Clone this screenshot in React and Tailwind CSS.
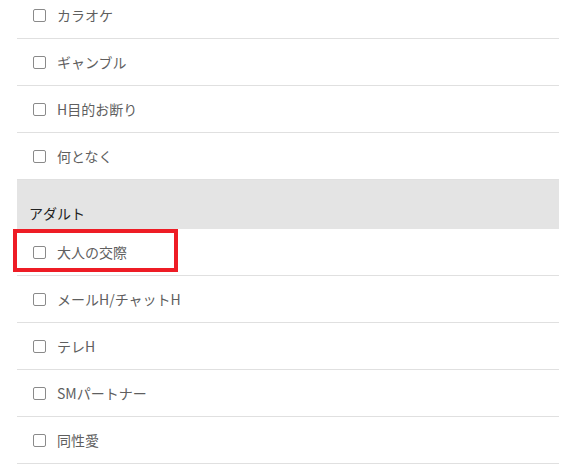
import React from 'react'

const group1 = ['カラオケ', 'ギャンブル', 'H目的お断り', '何となく']
const group2 = ['大人の交際', 'メールH/チャットH', 'テレH', 'SMパートナー', '同性愛']

const Row = ({ label, highlight }) => (
  <label className="relative flex items-center h-[47px] pl-4 border-b border-[#e0e0e0] cursor-pointer">
    <span className="w-[13px] h-[13px] border border-[#8a8a8a] rounded-[2px] bg-white shrink-0" />
    <span className="ml-[11px] text-[14px] leading-5 text-[#5f5f5f]">{label}</span>
    {highlight && (
      <span className="absolute left-[-4px] top-0 w-[165px] h-[43px] border-4 border-[#ee1c25] pointer-events-none" />
    )}
  </label>
)

const App = () => {
  return (
    <div
      className="w-[576px] h-[472px] overflow-hidden bg-white"
      style={{ fontFamily: '"Noto Sans CJK JP", "Noto Sans", sans-serif' }}
    >
      <div className="mx-[17px] mt-[-8px]">
        {/* 目的 */}
        {group1.map((item) => (
          <Row key={item} label={item} />
        ))}

        {/* アダルト */}
        <div className="bg-[#e4e4e4] pt-[23px] pb-[6px] pl-3 text-[14px] leading-5 text-[#222]">
          アダルト
        </div>
        {group2.map((item, i) => (
          <Row key={item} label={item} highlight={i === 0} />
        ))}
      </div>
    </div>
  )
}

export default App
